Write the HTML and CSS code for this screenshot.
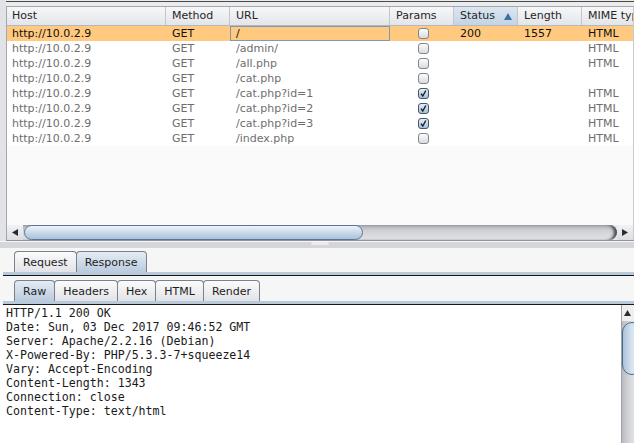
FILE: index.html
```html
<!DOCTYPE html>
<html>
<head>
<meta charset="utf-8">
<link rel="stylesheet" href="styles.css">
</head>
<body>
<div class="top">
  <div class="gutter"></div>
  <div class="pane">
    <div class="scrollpane">
      <div class="viewport">
        <div class="row head">
          <div class="th">Host</div>
          <div class="th">Method</div>
          <div class="th">URL</div>
          <div class="th">Params</div>
          <div class="th sorted"><span>Status</span><svg class="sort" width="8" height="7" viewBox="0 0 8 7"><polygon points="0,7 4,0 8,7" fill="#3c6fa6"/></svg></div>
          <div class="th">Length</div>
          <div class="th">MIME type</div>
        </div>
        <div class="row sel">
          <div class="td">http://10.0.2.9</div><div class="td">GET</div><div class="td focus">/</div>
          <div class="td chk"><span class="box"></span></div><div class="td">200</div><div class="td">1557</div><div class="td">HTML</div>
        </div>
        <div class="row">
          <div class="td">http://10.0.2.9</div><div class="td">GET</div><div class="td">/admin/</div>
          <div class="td chk"><span class="box"></span></div><div class="td"></div><div class="td"></div><div class="td">HTML</div>
        </div>
        <div class="row">
          <div class="td">http://10.0.2.9</div><div class="td">GET</div><div class="td">/all.php</div>
          <div class="td chk"><span class="box"></span></div><div class="td"></div><div class="td"></div><div class="td">HTML</div>
        </div>
        <div class="row">
          <div class="td">http://10.0.2.9</div><div class="td">GET</div><div class="td">/cat.php</div>
          <div class="td chk"><span class="box"></span></div><div class="td"></div><div class="td"></div><div class="td"></div>
        </div>
        <div class="row">
          <div class="td">http://10.0.2.9</div><div class="td">GET</div><div class="td">/cat.php?id=1</div>
          <div class="td chk"><span class="box on"><svg width="9" height="9" viewBox="0 0 9 9"><path d="M2 4.6 L3.8 7 L6.8 1.5" fill="none" stroke="#15202e" stroke-width="1.4"/></svg></span></div><div class="td"></div><div class="td"></div><div class="td">HTML</div>
        </div>
        <div class="row">
          <div class="td">http://10.0.2.9</div><div class="td">GET</div><div class="td">/cat.php?id=2</div>
          <div class="td chk"><span class="box on"><svg width="9" height="9" viewBox="0 0 9 9"><path d="M2 4.6 L3.8 7 L6.8 1.5" fill="none" stroke="#15202e" stroke-width="1.4"/></svg></span></div><div class="td"></div><div class="td"></div><div class="td">HTML</div>
        </div>
        <div class="row">
          <div class="td">http://10.0.2.9</div><div class="td">GET</div><div class="td">/cat.php?id=3</div>
          <div class="td chk"><span class="box on"><svg width="9" height="9" viewBox="0 0 9 9"><path d="M2 4.6 L3.8 7 L6.8 1.5" fill="none" stroke="#15202e" stroke-width="1.4"/></svg></span></div><div class="td"></div><div class="td"></div><div class="td">HTML</div>
        </div>
        <div class="row">
          <div class="td">http://10.0.2.9</div><div class="td">GET</div><div class="td">/index.php</div>
          <div class="td chk"><span class="box"></span></div><div class="td"></div><div class="td"></div><div class="td">HTML</div>
        </div>
      </div>
      <div class="hscroll">
        <div class="sbtn"><svg width="6" height="7" viewBox="0 0 6 7"><polygon points="6,0 0,3.5 6,7" fill="#2b2b2b"/></svg></div>
        <div class="htrack"><div class="hthumb"></div></div>
        <div class="sbtn"><svg width="6" height="7" viewBox="0 0 6 7"><polygon points="0,0 6,3.5 0,7" fill="#2b2b2b"/></svg></div>
      </div>
    </div>
  </div>
</div>
<div class="divider"><div class="band"><div class="grip"></div></div></div>
<div class="tabrow first">
  <div class="tabs">
    <div class="tab">Request</div>
    <div class="tab active">Response</div>
  </div>
  <div class="tabband"></div>
</div>
<div class="tabrow second">
  <div class="tabs">
    <div class="tab active">Raw</div>
    <div class="tab">Headers</div>
    <div class="tab">Hex</div>
    <div class="tab">HTML</div>
    <div class="tab">Render</div>
  </div>
  <div class="tabband"></div>
</div>
<div class="editor">
  <pre class="text">HTTP/1.1 200 OK
Date: Sun, 03 Dec 2017 09:46:52 GMT
Server: Apache/2.2.16 (Debian)
X-Powered-By: PHP/5.3.3-7+squeeze14
Vary: Accept-Encoding
Content-Length: 1343
Connection: close
Content-Type: text/html</pre>
  <div class="vscroll">
    <div class="vbtn"><svg width="7" height="6" viewBox="0 0 7 6"><polygon points="0,6 3.5,0 7,6" fill="#2b2b2b"/></svg></div>
    <div class="vthumb"></div>
  </div>
</div>
</body>
</html>
```

FILE: styles.css
```css
* { box-sizing: border-box; margin: 0; padding: 0; }
html, body { width: 634px; height: 443px; overflow: hidden; }
body {
  background: #f6f6f7;
  font-family: "DejaVu Sans", sans-serif;
  font-size: 11px;
  color: #222;
}

/* top table area */
.top { display: flex; height: 241px; background: #ececee; }
.gutter { width: 6px; background: #e2e3e6; }
.pane {
  flex: 1;
  margin-top: 1px;
  border-top: 1px solid #4a4a4a;
  padding-top: 4px;
  background: #ececec;
  min-width: 0;
}
.scrollpane {
  width: 628px;
  height: 235px;
  border: 1px solid #a3a8b0;
  border-right-color: #c8cbd0;
  border-bottom-color: #8e9299;
  display: flex;
  flex-direction: column;
  overflow: hidden;
}
.viewport { height: 218px; background: #fafafa; overflow: hidden; }

.row {
  display: grid;
  grid-template-columns: 159px 64px 160px 64px 64px 64px 80px;
  height: 15px;
  line-height: 15px;
  background: #ffffff;
  color: #6e6e6e;
  white-space: nowrap;
}
.row.head {
  height: 19px;
  line-height: 18px;
  background: linear-gradient(#f6f7f8, #e3e5e9);
  border-bottom: 1px solid #b4b8bf;
  color: #262626;
}
.th {
  padding-left: 6px;
  border-right: 1px solid #c3c7cd;
  overflow: hidden;
}
.th:first-child { padding-left: 5px; }
.th.sorted {
  background: linear-gradient(#dce6f0, #c3d4e5);
  display: flex;
  align-items: center;
  justify-content: space-between;
  padding-right: 5px;
}
.sort { margin-top: 1px; }

.td { padding-left: 6px; overflow: hidden; }
.td:first-child { padding-left: 5px; }
.row.sel { background: #ffc97f; color: #111; }
.td.focus { box-shadow: inset 0 0 0 1px #7f98b4; padding-left: 6px; }
.td.chk {
  display: flex;
  align-items: center;
  justify-content: center;
  padding-left: 2px;
}
.box {
  width: 11px;
  height: 11px;
  border: 1px solid #80858e;
  border-radius: 3px;
  background: linear-gradient(#fcfcfd, #d9dbe0);
  display: flex;
  align-items: center;
  justify-content: center;
}
.box.on {
  border-color: #45556a;
  background: linear-gradient(#e6eef6, #a9c0d9);
}

/* horizontal scrollbar */
.hscroll {
  height: 15px;
  display: flex;
  background: #e6e7ea;
}
.sbtn {
  width: 16px;
  display: flex;
  align-items: center;
  justify-content: center;
  background: linear-gradient(#f2f2f4, #dcdde1);
}
.htrack {
  flex: 1;
  background: linear-gradient(#a9abb1, #cfd0d4 35%, #e2e3e6);
  border-radius: 0 8px 8px 0;
  box-shadow: inset -4px 0 3px -1px #4a4c52;
  padding-left: 1px;
}
.hthumb {
  width: 339px;
  height: 15px;
  border: 1px solid #5c7590;
  border-radius: 8px;
  background: linear-gradient(#eef3f9, #c6d7e8 55%, #aac2da);
}

/* split divider */
.divider { height: 10px; padding-top: 1px; background: #f6f6f7; }
.band { height: 6px; background: #d5d6da; position: relative; }
.grip {
  position: absolute;
  left: 311px;
  top: 0;
  width: 18px;
  height: 3px;
  border-radius: 2px;
  background: #ececee;
}

/* tabs */
.tabrow { margin-left: 3px; }
.tabrow.second { margin-top: 4px; }
.tabs { display: flex; padding-left: 11px; height: 21px; }
.tab {
  height: 21px;
  line-height: 21px;
  padding: 0 8px;
  border: 1px solid #7b8089;
  border-bottom: none;
  border-radius: 4px 4px 0 0;
  background: linear-gradient(#fbfbfc, #e2e3e7);
  color: #1e1e1e;
  margin-right: -1px;
}
.tab.active {
  background: linear-gradient(#e4ecf4, #b9cbde);
  position: relative;
  z-index: 1;
}
.tabband {
  height: 4px;
  background: #b8c9da;
  border-bottom: 1px solid #171717;
}

/* response text */
.editor {
  display: flex;
  height: 138px;
  background: #ffffff;
}
.text {
  flex: 1;
  padding: 1px 0 0 6px;
  font-family: "DejaVu Sans Mono", monospace;
  font-size: 11.6px;
  line-height: 14px;
  color: #1a1a1a;
}
.vscroll {
  width: 13px;
  border-left: 1px solid #9ea2a9;
  background: linear-gradient(90deg, #b9bbc0, #d5d6da 60%, #e0e1e4);
  display: flex;
  flex-direction: column;
}
.vbtn {
  height: 16px;
  display: flex;
  align-items: center;
  justify-content: center;
  background: #eeeff1;
  padding-right: 1px;
}
.vthumb {
  margin-top: 1px;
  width: 20px;
  height: 53px;
  border: 1px solid #4f6a85;
  border-radius: 10px;
  background: linear-gradient(90deg, #aac2da, #d3e1ee 45%, #eef3f9);
}
```
